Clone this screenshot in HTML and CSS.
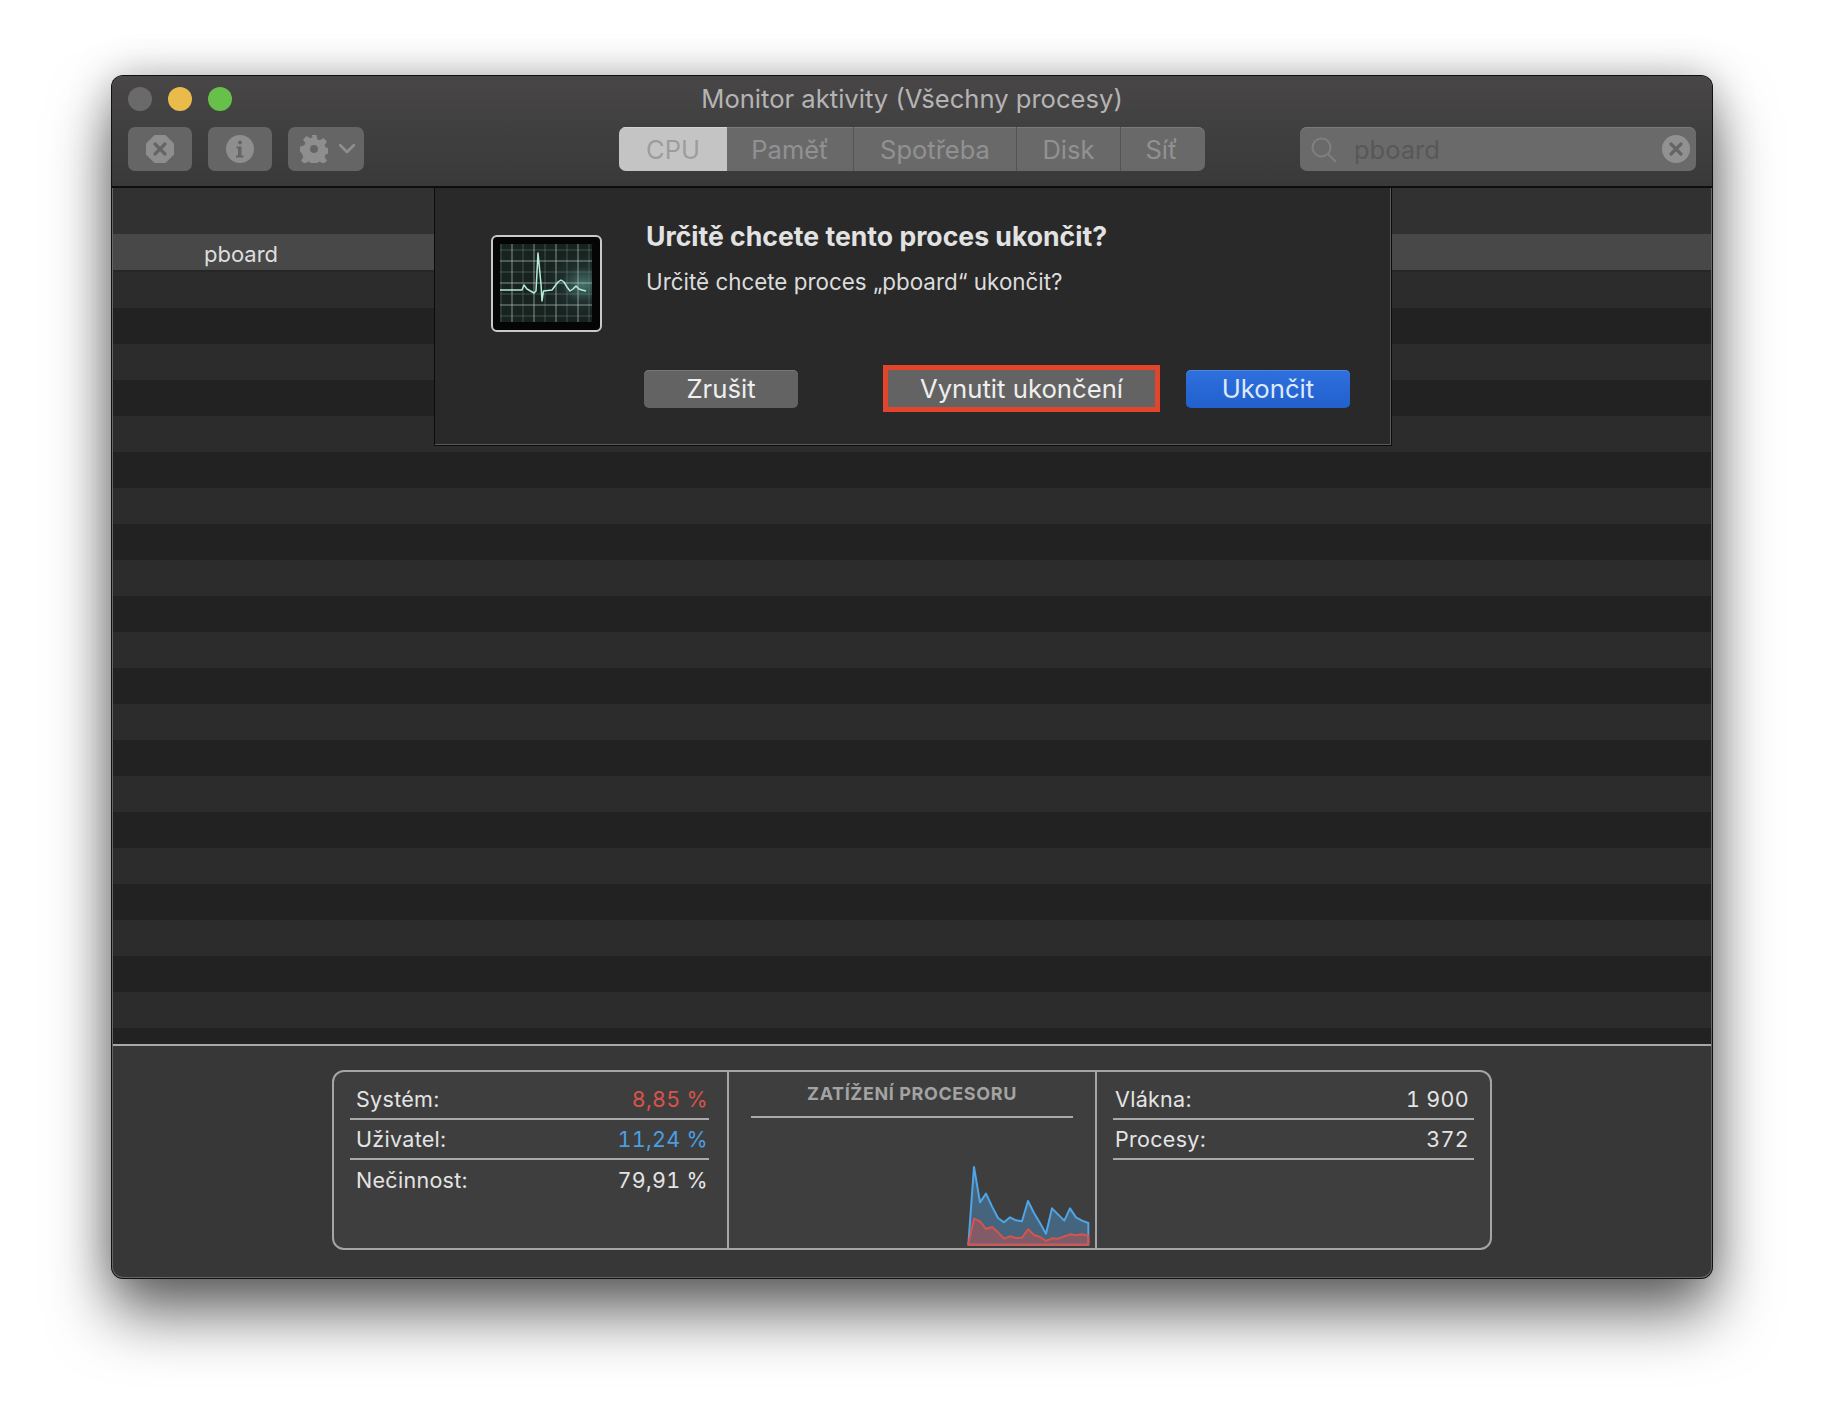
FILE: index.html
```html
<!DOCTYPE html>
<html lang="cs">
<head>
<meta charset="utf-8">
<title>Monitor aktivity</title>
<link rel="stylesheet" href="styles.css">
</head>
<body>
<main class="window">
  <header class="toolbar">
    <div class="titlebar">
      <div class="lights"><i class="light close"></i><i class="light min"></i><i class="light max"></i></div>
      <div class="title">Monitor aktivity (Všechny procesy)</div>
    </div>
    <div class="tools">
      <div class="tool-group">
        <div class="tool">
          <svg width="28" height="28" viewBox="0 0 28 28"><path class="glyph" d="M8.500 0h11L28 8.500v11L19.500 28h-11L0 19.500v-11z"/><path class="glyph-x" d="M9 9l10 10M19 9L9 19"/></svg>
        </div>
        <div class="tool">
          <svg width="28" height="28" viewBox="0 0 28 28"><circle class="glyph" cx="14" cy="14" r="14"/><circle class="glyph-dot" cx="14" cy="7.500" r="2"/><path class="glyph-dot" d="M10.500 11.500h5v9h2v2h-7.500v-2h2v-7h-1.500z"/></svg>
        </div>
        <div class="tool tool-wide">
          <svg width="28" height="28" viewBox="0 0 28 28"><path class="glyph" fill-rule="evenodd" d="M11.500 0h5l.8 4.200 2.600 1.100 3.600-2.400 3.500 3.500-2.400 3.600 1.100 2.600 4.300.9v5l-4.300.8-1.100 2.600 2.400 3.600-3.500 3.500-3.600-2.400-2.600 1.100-.8 3.500h-5l-.8-3.500-2.600-1.100-3.600 2.400-3.500-3.500 2.400-3.600-1.100-2.600L0 16.500v-5l4.300-.9 1.100-2.600L3 4.400l3.500-3.500 3.600 2.400 2.600-1.100zM14 10a4 4 0 1 0 0 8 4 4 0 0 0 0-8z"/></svg>
          <svg class="chev" width="16" height="10" viewBox="0 0 16 10"><path d="M1 1l7 7 7-7"/></svg>
        </div>
      </div>
      <nav class="tabs">
        <div class="tab tab-on tab-cpu">CPU</div>
        <div class="tab tab-mem">Paměť</div>
        <div class="tab tab-energy">Spotřeba</div>
        <div class="tab tab-disk">Disk</div>
        <div class="tab tab-net">Síť</div>
      </nav>
      <div class="search">
        <svg class="lens" width="26" height="26" viewBox="0 0 26 26"><circle cx="10.500" cy="10.500" r="9"/><path d="M17 17l8 8"/></svg>
        <span class="query">pboard</span>
        <svg class="clear" width="28" height="28" viewBox="0 0 28 28"><circle class="glyph" cx="14" cy="14" r="14"/><path class="glyph-x" d="M9 9l10 10M19 9L9 19"/></svg>
      </div>
    </div>
  </header>

  <section class="table">
    <div class="table-head"></div>
    <div class="row row-selected"><span class="proc">pboard</span></div>
    <div class="row"></div><div class="row"></div><div class="row"></div><div class="row"></div>
    <div class="row"></div><div class="row"></div><div class="row"></div><div class="row"></div>
    <div class="row"></div><div class="row"></div><div class="row"></div><div class="row"></div>
    <div class="row"></div><div class="row"></div><div class="row"></div><div class="row"></div>
    <div class="row"></div><div class="row"></div><div class="row"></div><div class="row"></div>
    <div class="row"></div><div class="row"></div>
  </section>

  <section class="dialog">
    <div class="app-icon">
      <svg width="92" height="78" viewBox="0 0 92 78">
        <defs>
          <radialGradient id="glow" cx="0.9" cy="0.52" r="0.42">
            <stop offset="0" stop-color="#47726a"/>
            <stop offset="0.55" stop-color="#1f2f2c"/>
            <stop offset="1" stop-color="#18221f"/>
          </radialGradient>
        </defs>
        <rect width="92" height="78" fill="url(#glow)"/>
        <path class="grid" d="M1 0v78M23 0v78M45 0v78M67 0v78M89 0v78M0 6h92M0 28h92M0 50h92M0 72h92"/>
        <path class="grid-bright" d="M12 0v78M34 0v78M56 0v78M78 0v78M0 17h92M0 39h92M0 61h92"/>
        <path class="trace" d="M0 46L22 46 24 41 27 45 34 49 36 47 38 9 41 40 42 57 43.500 47 52 46 55 42 58 38 61 36 64 38 67 43 70 47 73 45 76 42 79 45 82 46 86 47"/>
      </svg>
    </div>
    <div class="dialog-body">
      <h1 class="dialog-title">Určitě chcete tento proces ukončit?</h1>
      <p class="dialog-text">Určitě chcete proces „pboard“ ukončit?</p>
      <div class="dialog-actions">
        <button class="btn btn-cancel">Zrušit</button>
        <button class="btn btn-force">Vynutit ukončení</button>
        <button class="btn btn-primary">Ukončit</button>
      </div>
    </div>
  </section>

  <footer class="bottom">
    <div class="panel">
      <div class="col col-left">
        <div class="stat stat-line"><span>Systém:</span><span class="num red">8,85 %</span></div>
        <div class="stat stat-line"><span>Uživatel:</span><span class="num blue">11,24 %</span></div>
        <div class="stat"><span>Nečinnost:</span><span class="num">79,91 %</span></div>
      </div>
      <div class="col-mid">
        <div class="chart-title">ZATÍŽENÍ PROCESORU</div>
        <svg class="chart" width="124" height="84" viewBox="0 0 372 252">
          <path class="area-blue" d="M4 248L21 15 39 121 57 95 75 133 93 168 111 181 129 166 147 175 165 178 183 117 201 153 219 183 237 215 255 139 273 157 292 176 309 139 327 166 345 176 364 183V248Z"/>
          <path class="area-red" d="M4 248L21 170 39 178 57 201 75 195 93 211 111 230 129 223 147 228 165 227 183 202 201 219 219 225 237 237 255 229 273 230 292 223 309 217 327 220 345 217 364 221V248Z"/>
        </svg>
      </div>
      <div class="col col-right">
        <div class="stat stat-line"><span>Vlákna:</span><span class="num">1 900</span></div>
        <div class="stat stat-line"><span>Procesy:</span><span class="num">372</span></div>
      </div>
    </div>
  </footer>
</main>
</body>
</html>
```
FILE: styles.css
```css
* { box-sizing: border-box; }
html, body { margin: 0; height: 100%; }
body {
  background: #fff;
  padding: 76px 112px 148px;
  font-family: Inter, "Noto Sans", "Liberation Sans", sans-serif;
  overflow: hidden;
}
.window {
  position: relative;
  display: flex;
  flex-direction: column;
  height: 1202px;
  border-radius: 11px;
  background: #666;
  box-shadow: 0 0 0 1px #111, 0 36px 62px rgba(0,0,0,.58), 0 0 42px rgba(0,0,0,.26);
}
.toolbar {
  height: 112px;
  padding: 0 16px;
  flex: none;
  border-radius: 11px 11px 0 0;
  border-bottom: 2px solid #0e0e0e;
  background: linear-gradient(#484647, #393939);
}
.titlebar { position: relative; height: 51px; display: flex; align-items: center; }
.lights { display: flex; gap: 16px; margin-top: -5px; }
.light { width: 24px; height: 24px; border-radius: 50%; display: block; }
.close { background: #6b6a6b; }
.min { background: #e9bb4b; }
.max { background: #66c04a; }
.title {
  position: absolute;
  left: 0; right: 0; top: 6px;
  text-align: center;
  color: #b5b4b4;
  font-size: 25.600px;
  line-height: 34px;
}
.tools { display: flex; align-items: center; height: 44px; }
.tool-group { display: flex; gap: 16px; width: 491px; }
.tool, .tabs, .search { background: #666566; border-radius: 7px; height: 44px; }
.tool { width: 64px; display: flex; align-items: center; justify-content: center; }
.tool-wide { width: 76px; gap: 11px; justify-content: flex-start; padding-left: 12px; }
.glyph { fill: #8f8e8f; }
.glyph-x { fill: none; stroke: #666566; stroke-width: 3.200; stroke-linecap: round; }
.glyph-dot { fill: #666566; }
.chev path { fill: none; stroke: #8f8e8f; stroke-width: 2.800; stroke-linecap: round; stroke-linejoin: round; }
.tabs { display: flex; overflow: hidden; width: 586px; background: #6a696a; box-shadow: inset 0 1px 0 #7b7a7b; }
.tab {
  display: flex; align-items: center; justify-content: center;
  color: #929192;
  font-size: 25.500px;
  border-right: 1px solid #545354;
}
.tab-on { background: #c5c4c5; color: #9d9c9d; border-right: 0; box-shadow: inset 0 1px 0 #d4d3d4; }
.tab-cpu { width: 108px; }
.tab-mem { width: 127px; }
.tab-energy { width: 163px; }
.tab-disk { width: 104px; }
.tab-net { width: 84px; border-right: 0; padding-right: 3px; }
.search {
  margin-left: 95px;
  width: 396px;
  background: #6b6a6b;
  display: flex; align-items: center;
  padding: 0 6px 0 11px;
  box-shadow: inset 0 1px 0 #7b7a7b;
}
.lens { flex: none; margin-top: 2px; }
.lens circle, .lens path { fill: none; stroke: #808080; stroke-width: 2; }
.query { flex: 1; margin-left: 17px; color: #585758; font-size: 25.500px; }
.clear { flex: none; }
.clear .glyph { fill: #929192; }
.table { height: 856px; flex: none; overflow: hidden; background: #222; margin: 0 1px; }
.table-head { height: 46px; background: #323132; }
.row { height: 36px; background: #2c2c2c; }
.row:nth-child(even) { background: #222; }
.row.row-selected { height: 38px; background: #484848; border-bottom: 2px solid #262626; display: flex; align-items: center; }
.proc { margin-left: 91px; color: #dedede; font-size: 22px; margin-top: 3px; }
.dialog {
  position: absolute;
  left: 323px; top: 112px;
  width: 956px; height: 257px;
  display: flex;
  background: #292929;
  border-right: 1px solid #5a5a5a;
  border-bottom: 1px solid #5a5a5a;
  box-shadow: 0 0 0 1px #0c0c0c;
  padding: 0 35px 0 56px;
}
.app-icon {
  flex: none;
  width: 111px; height: 97px;
  margin-top: 47px;
  background: #050505;
  border: 2px solid #c9c9c9;
  border-radius: 6px;
  padding: 7px 7px 8px;
}
.app-icon svg { display: block; }
.grid { fill: none; stroke: #6f8a84; stroke-width: .8; opacity: .6; }
.grid-bright { fill: none; stroke: #b5c7c2; stroke-width: .8; opacity: .85; }
.trace { fill: none; stroke: #b4ecdc; stroke-width: 1.500; stroke-linejoin: round; }
.dialog-body { margin-left: 44px; flex: 1; display: flex; flex-direction: column; }
.dialog-title { margin: 31px 0 0; color: #e2e2e2; font-size: 26.600px; line-height: 34px; font-weight: 700; letter-spacing: 0; }
.dialog-text { margin: 13px 0 0; color: #dcdcdc; font-size: 22.400px; line-height: 32px; }
.dialog-actions { display: flex; align-items: center; margin-top: 67px; margin-left: -2px; }
.btn {
  height: 38px;
  border: 0;
  border-radius: 5px;
  font: 400 25.700px/38px Inter, "Noto Sans", sans-serif;
  color: #efefef;
  background: #636363;
  padding: 0;
  box-shadow: inset 0 1px 0 #777;
}
.btn-cancel { width: 154px; margin-right: 85px; }
.btn-force { width: 277px; height: 47px; margin-right: 26px; border: 5px solid #e2452b; border-radius: 0; line-height: 37px; box-shadow: none; }
.btn-primary { width: 164px; background: linear-gradient(#2f70de, #2160cd); color: #dfe9fa; box-shadow: inset 0 1px 0 #4b86e6; }
.bottom { flex: 1; background: #373737; border-top: 2px solid #a8a8a8; margin: 0 1px 1px; padding: 24px 0 0 219px; border-radius: 0 0 10px 10px; }
.panel {
  width: 1160px; height: 180px;
  display: flex;
  border: 2px solid #a5a5a5;
  border-radius: 12px;
  background: #3e3e3e;
}
.col { padding-top: 8px; }
.col-left { width: 393px; flex: none; padding-left: 16px; padding-right: 18px; }
.col-right { flex: 1; padding-left: 16px; padding-right: 16px; }
.col-mid { width: 370px; flex: none; position: relative; border-left: 2px solid #a5a5a5; border-right: 2px solid #a5a5a5; padding: 0 22px; }
.stat {
  height: 40px;
  display: flex; justify-content: space-between; align-items: center;
  padding: 0 1px 0 6px;
  color: #e4e4e4;
  font-size: 21.500px;
  letter-spacing: .3px;
}
.col-right .stat { padding-left: 2px; padding-right: 5px; }
.num { font-variant-numeric: tabular-nums; letter-spacing: .3px; }
.red { color: #d9534a; }
.blue { color: #4a9fe0; }
.stat-line { border-bottom: 2px solid #a9a9a9; }
.chart-title {
  height: 46px;
  border-bottom: 2px solid #a9a9a9;
  color: #a3a3a3;
  font-size: 18px;
  font-weight: 700;
  line-height: 43px;
  text-align: center;
  letter-spacing: .6px;
}
.chart { position: absolute; right: 4px; bottom: 2px; }
.area-blue { fill: rgba(79,160,225,.4); stroke: #4fa5e6; stroke-width: 6; stroke-linejoin: round; }
.area-red { fill: rgba(220,80,70,.4); stroke: #d9534a; stroke-width: 6; stroke-linejoin: round; }
```
